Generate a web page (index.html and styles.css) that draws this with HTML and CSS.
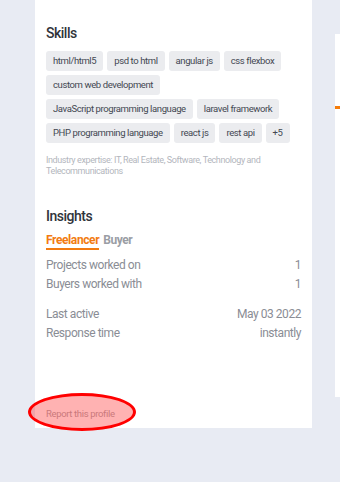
FILE: index.html
```html
<!DOCTYPE html>
<html lang="en">
<head>
    <meta charset="UTF-8">
    <meta name="viewport" content="width=device-width, initial-scale=1.0">
    <title>Freelancer profile</title>
    <link rel="stylesheet" href="styles.css">
</head>
<body>
    <div class="page">
        <div class="profile-card">
            <section class="skills">
                <h2>Skills</h2>
                <ul class="tags">
                    <li>html/html5</li>
                    <li>psd to html</li>
                    <li>angular js</li>
                    <li>css flexbox</li>
                    <li>custom web development</li>
                    <li>JavaScript programming language</li>
                    <li>laravel framework</li>
                    <li>PHP programming language</li>
                    <li>react js</li>
                    <li>rest api</li>
                    <li>+5</li>
                </ul>
                <p class="industry">Industry expertise: IT, Real Estate, Software, Technology and Telecommunications</p>
            </section>

            <section class="insights">
                <h2>Insights</h2>
                <div class="tabs">
                    <span class="tab active">Freelancer</span>
                    <span class="tab">Buyer</span>
                </div>
                <div class="stats first">
                    <div class="stat"><span>Projects worked on</span><span>1</span></div>
                    <div class="stat"><span>Buyers worked with</span><span>1</span></div>
                </div>
                <div class="stats">
                    <div class="stat"><span>Last active</span><span>May 03 2022</span></div>
                    <div class="stat"><span>Response time</span><span>instantly</span></div>
                </div>
            </section>

            <div class="report">
                <a href="#" class="report-link">Report this profile</a>
                <span class="highlight"></span>
            </div>
        </div>

        <div class="side-panel">
            <div class="side-mark"></div>
        </div>
    </div>
</body>
</html>
```

FILE: styles.css
```css
body {
    margin: 0;
    padding: 0;
    background-color: #e8ebf3;
    font-family: 'Roboto', 'Liberation Sans', sans-serif;
    color: #333;
}

.page {
    display: flex;
    align-items: flex-start;
    height: 482px;
    overflow: hidden;
}

.profile-card {
    margin-left: 35px;
    width: 255px;
    padding: 23px 11px 12px;
    background: white;
    flex-shrink: 0;
}

h2 {
    margin: 0;
    font-size: 14px;
    font-weight: 500;
    line-height: 20px;
    letter-spacing: -0.5px;
    color: #30343b;
}

.skills h2 {
    margin-bottom: 8px;
}

.tags {
    list-style: none;
    margin: 0;
    padding: 0;
    display: flex;
    flex-wrap: wrap;
    gap: 4px;
}

.tags li {
    background: #ebecef;
    color: #434852;
    font-size: 9.5px;
    letter-spacing: -0.4px;
    line-height: 20px;
    height: 20px;
    padding: 0 7px;
    border-radius: 3px;
}

.industry {
    margin: 12px 0 0;
    font-size: 9px;
    line-height: 11px;
    letter-spacing: -0.4px;
    color: #b3b6bd;
}

.insights {
    margin-top: 29px;
}

.tabs {
    display: flex;
    gap: 4px;
    margin-top: 6px;
}

.tab {
    font-size: 12px;
    font-weight: bold;
    line-height: 16px;
    letter-spacing: -0.4px;
    color: #9a9da4;
    border-bottom: 2px solid transparent;
}

.tab.active {
    color: #f27b12;
    border-bottom-color: #f27b12;
}

.stats {
    margin-top: 11px;
}

.stats.first {
    margin-top: 6px;
}

.stat {
    display: flex;
    justify-content: space-between;
    font-size: 12px;
    line-height: 19px;
    letter-spacing: -0.45px;
    color: #8a8d95;
}

.report {
    position: relative;
    margin-top: 59px;
    height: 14px;
}

.report-link {
    font-size: 9.5px;
    line-height: 14px;
    letter-spacing: -0.35px;
    color: #b2aeb2;
    text-decoration: none;
}

/* red marker drawn over the link */
.highlight {
    position: absolute;
    left: -18px;
    top: -9px;
    width: 102px;
    height: 32px;
    border: 3px solid #ff0000;
    border-radius: 50%;
    background: rgba(255, 0, 0, 0.3);
}

.side-panel {
    margin-left: 23px;
    margin-top: 34px;
    width: 40px;
    height: 363px;
    background: white;
    flex-shrink: 0;
}

.side-mark {
    margin-top: 72px;
    height: 3px;
    background: #f57c0a;
}
```
